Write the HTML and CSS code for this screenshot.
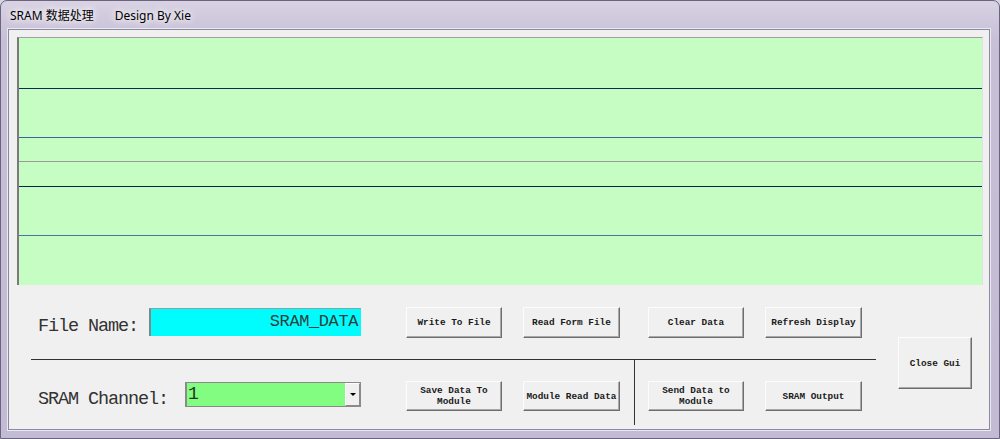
FILE: index.html
```html
<!DOCTYPE html>
<html lang="zh-CN">
<head>
    <meta charset="UTF-8">
    <title>SRAM 数据处理</title>
    <link rel="stylesheet" href="styles.css">
</head>
<body>
    <div class="window">
        <div class="titlebar">
            <span class="title-main">SRAM 数据处理</span>
            <span class="title-sub">Design By Xie</span>
        </div>
        <div class="client">
            <div class="grid-view">
                <div class="grid-row row-a"></div>
                <div class="grid-row row-b"></div>
                <div class="grid-row row-c"></div>
                <div class="grid-row row-d"></div>
                <div class="grid-row row-e"></div>
                <div class="grid-row row-f"></div>
            </div>
            <div class="controls">
                <div class="controls-main">
                    <div class="ctl-row ctl-top">
                        <label class="field-label file-label">File Name:</label>
                        <div class="file-box">SRAM_DATA</div>
                        <button class="btn btn-1">Write To File</button>
                        <button class="btn btn-2">Read Form File</button>
                        <span class="vline hidden"></span>
                        <button class="btn btn-3">Clear Data</button>
                        <button class="btn btn-4">Refresh Display</button>
                    </div>
                    <div class="separator"></div>
                    <div class="ctl-row ctl-bottom">
                        <label class="field-label chan-label">SRAM Channel:</label>
                        <div class="combo">
                            <span class="combo-value">1</span>
                            <span class="combo-arrow"></span>
                        </div>
                        <button class="btn btn-1">Save Data To<br>Module</button>
                        <button class="btn btn-2">Module Read Data</button>
                        <span class="vline"></span>
                        <button class="btn btn-3">Send Data to<br>Module</button>
                        <button class="btn btn-4">SRAM Output</button>
                    </div>
                </div>
                <button class="btn btn-close">Close Gui</button>
            </div>
        </div>
    </div>
</body>
</html>
```

FILE: styles.css
```css
body {
    margin: 0;
    background-color: #d8d4e0;
}
.window {
    width: 1000px;
    height: 439px;
    box-sizing: border-box;
    padding: 0 9px 8px 7px;
    border: 1px solid #6a6480;
    border-radius: 7px 7px 0 0;
    background: linear-gradient(#d8d2e3, #c6bfd6 40px, #c2bbd3);
    display: flex;
    flex-direction: column;
}
.titlebar {
    height: 28px;
    display: flex;
    align-items: center;
    font-family: "Noto Sans", "Noto Sans CJK SC", sans-serif;
    font-size: 12px;
    color: #000;
    padding-left: 2px;
}
.title-main, .title-sub {
    text-shadow: 0 0 6px #fff, 0 0 10px #fff;
}
.title-sub {
    margin-left: 21px;
}
.client {
    flex: 1;
    background-color: #f0f0f0;
    border: 1px solid #8d87a0;
    box-shadow: 0 0 0 1px #ece9f2;
    display: flex;
    flex-direction: column;
}
.grid-view {
    margin: 7px 6px 0 8px;
    height: 248px;
    box-sizing: border-box;
    border-left: 2px solid #7a7a7a;
    border-top: 1px solid #a0a0a0;
    border-right: 1px solid #e0e0e0;
    background-color: #c6fdc2;
}
.grid-row {
    border-bottom: 1px solid #1c2f6a;
}
.row-a { height: 50px; border-bottom-color: #102a5c; }
.row-b { height: 48px; border-bottom-color: #3e62a8; }
.row-c { height: 23px; border-bottom-color: #9a9a9a; }
.row-d { height: 24px; border-bottom-color: #06244a; }
.row-e { height: 48px; border-bottom-color: #4a72a6; }
.row-f { height: 49px; border-bottom: none; }

.controls {
    display: flex;
    padding-left: 22px;
}
.controls-main {
    width: 845px;
    display: flex;
    flex-direction: column;
}
.ctl-row {
    display: flex;
    align-items: flex-start;
}
.ctl-top {
    height: 74px;
    padding-left: 7px;
}
.ctl-bottom {
    height: 65px;
    padding-left: 7px;
}
.separator {
    height: 1px;
    background-color: #333;
}
.field-label {
    font-family: "Liberation Mono", monospace;
    font-size: 18.5px;
    letter-spacing: -1.1px;
    line-height: 20px;
    color: #333;
    white-space: nowrap;
}
.file-label {
    width: 111px;
    margin-top: 32px;
}
.chan-label {
    width: 147px;
    margin-top: 30px;
}
.file-box {
    width: 212px;
    height: 28px;
    margin-top: 23px;
    box-sizing: border-box;
    background-color: #00fdfd;
    border-left: 2px solid #7a8a8a;
    border-top: 1px solid #90a0a0;
    padding-right: 3px;
    font-family: "Liberation Mono", monospace;
    font-size: 17px;
    letter-spacing: -0.4px;
    line-height: 26px;
    color: #2f3d3d;
    text-align: right;
}
.combo {
    width: 176px;
    height: 25px;
    margin-top: 22px;
    box-sizing: border-box;
    background-color: #82fd82;
    border: 1px solid #8a8a8a;
    border-left-width: 2px;
    display: flex;
    justify-content: space-between;
}
.combo-value {
    font-family: "Liberation Mono", monospace;
    font-size: 18px;
    line-height: 23px;
    color: #1a3a1a;
    padding-left: 1px;
}
.combo-arrow {
    width: 15px;
    box-sizing: border-box;
    background-color: #f0f0f0;
    border: 1px solid #fff;
    border-right-color: #8a8a8a;
    border-bottom-color: #8a8a8a;
    display: flex;
    align-items: center;
    justify-content: center;
}
.combo-arrow::after {
    content: "";
    border-left: 3px solid transparent;
    border-right: 3px solid transparent;
    border-top: 3px solid #000;
}
.btn {
    height: 31px;
    margin-top: 22px;
    box-sizing: border-box;
    padding: 0;
    background-color: #f0f0f0;
    border: 1px solid #fcfcfc;
    border-right-color: #6e6e6e;
    border-bottom-color: #6e6e6e;
    box-shadow: inset -1px -1px 0 #a8a8a8;
    font-family: "Liberation Mono", monospace;
    font-size: 9.4px;
    font-weight: bold;
    line-height: 11px;
    color: #1a1a1a;
    text-align: center;
}
.ctl-bottom .btn {
    height: 30px;
    margin-top: 21px;
}
.btn-1 { width: 96px; margin-left: 45px; }
.btn-2 { width: 97px; margin-left: 21px; }
.btn-3 { width: 96px; }
.btn-4 { width: 97px; margin-left: 21px; }
.vline {
    width: 1px;
    align-self: stretch;
    margin: 0 13px 0 14px;
    background-color: #333;
}
.vline.hidden {
    background-color: transparent;
}
.btn-close {
    width: 74px;
    height: 52px;
    margin: 52px 0 0 22px;
}
```
